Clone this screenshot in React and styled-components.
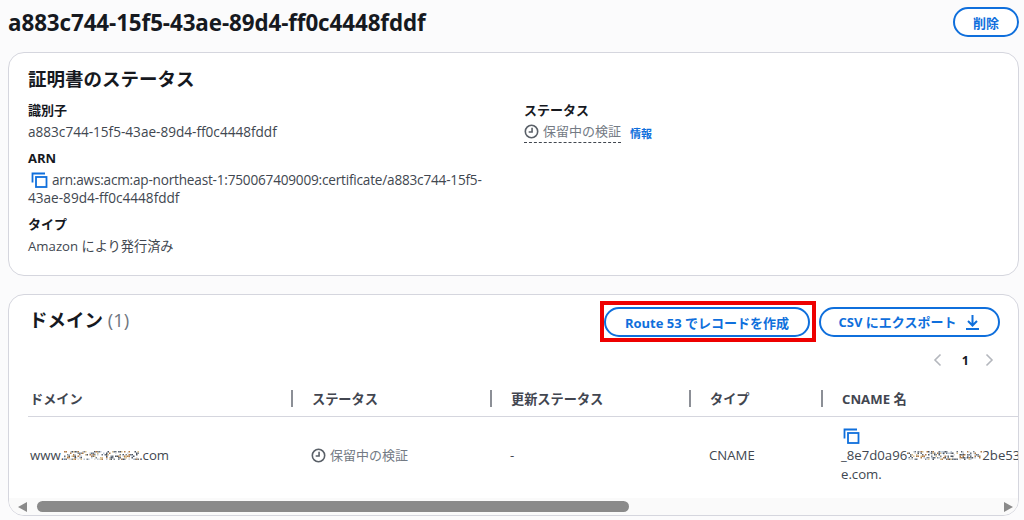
import React from 'react'
import styled, { createGlobalStyle } from 'styled-components'

const FONT = '"Open Sans", "Noto Sans CJK JP", sans-serif'
const BLUE = '#0f6fdc'

const GlobalStyle = createGlobalStyle`
  html, body { margin: 0; padding: 0; background: #fbfbfc; }
  body { font-family: ${FONT}; color: #16191f; width: 1024px; height: 520px; overflow: hidden; }
  * { box-sizing: border-box; }
`

const Page = styled.div`
  display: flex;
  flex-direction: column;
  padding: 7px 5px 0 8px;
`

const TitleRow = styled.div`
  display: flex;
  justify-content: space-between;
  align-items: center;
  height: 30px;
  margin-bottom: 15px;
`

const Title = styled.h1`
  margin: 0;
  font-size: 22.4px;
  font-weight: 700;
  letter-spacing: -0.1px;
  color: #16191f;
`

const PillButton = styled.button`
  display: flex;
  align-items: center;
  justify-content: center;
  gap: 9px;
  height: 30px;
  width: ${(p) => p.$width}px;
  padding: 0;
  border: 2px solid ${BLUE};
  border-radius: 15px;
  background: #fff;
  color: ${BLUE};
  font-family: ${FONT};
  font-size: 13px;
  font-weight: 700;
`

const Card = styled.section`
  position: relative;
  height: ${(p) => p.$height}px;
  margin-bottom: ${(p) => p.$gap || 0}px;
  border: 1px solid #d5d6de;
  border-radius: 16px;
  background: #fff;
  overflow: hidden;
`

const StatusBody = styled.div`
  padding: 14px 19px 0;
`

const SectionTitle = styled.h2`
  margin: 0 0 9px;
  font-size: 18.5px;
  line-height: 24px;
  font-weight: 700;
`

const Columns = styled.div`
  display: grid;
  grid-template-columns: 496px 1fr;
`

const Field = styled.div`
  margin-bottom: 7px;
`

const Label = styled.div`
  font-size: 13px;
  line-height: 21px;
  font-weight: 700;
`

const Value = styled.div`
  font-size: ${(p) => (p.$cjk ? 13.2 : 13.6)}px;
  line-height: 18px;
  color: #414750;
  width: ${(p) => (p.$wrap ? '470px' : 'auto')};
  padding-top: 2px;
  &::first-line {
    letter-spacing: ${(p) => (p.$wrap ? '-0.2px' : '0')};
  }
`

const CopyMark = styled.svg`
  display: ${(p) => (p.$block ? 'block' : 'inline-block')};
  width: 17px;
  height: 17px;
  margin: ${(p) => (p.$block ? '0 0 1px 2px' : '0 4px 0 3px')};
  vertical-align: -4px;
`

const StatusLine = styled.div`
  display: flex;
  align-items: center;
  gap: 9px;
  padding-top: 1px;
`

const Pending = styled.span`
  display: inline-flex;
  align-items: center;
  gap: 4px;
  font-size: 13px;
  line-height: 19px;
  color: #737a84;
  border-bottom: ${(p) => (p.$dashed ? '1px dashed #414750' : 'none')};
  padding-bottom: ${(p) => (p.$dashed ? '1px' : '0')};
`

const ClockMark = styled.svg`
  width: 15px;
  height: 15px;
  flex: none;
`

const InfoLink = styled.a`
  font-size: 11px;
  font-weight: 700;
  color: ${BLUE};
`

const DomainHead = styled.div`
  display: flex;
  justify-content: space-between;
  align-items: flex-start;
  padding: 6px 18px 0 20px;
`

const DomainTitle = styled.h2`
  margin: 7px 0 0;
  font-size: 18.5px;
  line-height: 24px;
  font-weight: 700;
`

const Count = styled.span`
  font-weight: 400;
  color: #6f7680;
`

const Actions = styled.div`
  display: flex;
  align-items: center;
  gap: 3px;
`

const Highlight = styled.div`
  border: 4px solid #ee0000;
  padding: 2px 2px 1px 0;
`

const Pager = styled.div`
  display: flex;
  justify-content: flex-end;
  align-items: center;
  gap: 14px;
  height: 20px;
  margin: 8px 23px 0 0;
  font-size: 12.5px;
  font-weight: 700;
`

const PageNumber = styled.span`
  margin-left: 4px;
`

const PagerMark = styled.svg`
  width: 12px;
  height: 14px;
`

const TableGrid = styled.div`
  display: grid;
  grid-template-columns: 264px 199px 199px 132px 240px;
  margin: 11px 0 0 19px;
  width: 1034px;
`

const HeadCell = styled.div`
  display: flex;
  align-items: center;
  height: 36px;
  border-bottom: 1px solid #d5d6de;
  font-size: 13.2px;
  font-weight: 700;
  color: #424650;
  padding-left: ${(p) => (p.$first ? '2px' : '20px')};
  position: relative;
  &::before {
    content: '';
    display: ${(p) => (p.$first ? 'none' : 'block')};
    position: absolute;
    left: -1px;
    top: 9px;
    height: 17px;
    width: 2px;
    background: #8c8f96;
  }
`

const BodyCell = styled.div`
  display: flex;
  align-items: ${(p) => (p.$top ? 'flex-start' : 'center')};
  flex-direction: ${(p) => (p.$top ? 'column' : 'row')};
  height: 76px;
  font-size: 13.2px;
  line-height: 19px;
  color: #414750;
  padding: ${(p) => (p.$top ? '11px 0 0 19px' : p.$first ? '0 0 0 2px' : '0 0 0 19px')};
`

const Masked = styled.svg`
  width: ${(p) => p.$width}px;
  height: 11px;
  vertical-align: -1px;
`

const ScrollStrip = styled.div`
  position: absolute;
  left: 0;
  right: 0;
  bottom: 0;
  height: 17px;
  display: flex;
  align-items: center;
  gap: 10px;
  padding: 0 5px 0 9px;
  background: #fafafa;
`

const ScrollArrow = styled.div`
  width: 0;
  height: 0;
  flex: none;
  border-top: 5.5px solid transparent;
  border-bottom: 5.5px solid transparent;
  ${(p) => (p.$right ? 'border-left: 9px solid #8a8a8a;' : 'border-right: 9px solid #8a8a8a;')}
`

const ScrollTrack = styled.div`
  flex: 1;
  height: 11px;
`

const ScrollThumb = styled.div`
  width: 592px;
  height: 11px;
  border-radius: 6px;
  background: #8a8a8a;
`

function CopyIcon({ block }) {
  return (
    <CopyMark $block={block} viewBox="0 0 17 17" fill="none" stroke={BLUE} strokeWidth="1.8">
      <path d="M1.5 10.5V1.5H14" />
      <rect x="5" y="5" width="10.5" height="10" />
    </CopyMark>
  )
}

function ClockIcon() {
  return (
    <ClockMark viewBox="0 0 16 16" fill="none" stroke="#5a6068" strokeWidth="1.7">
      <circle cx="8" cy="8" r="6.6" />
      <path d="M8.6 4v4.6H5" />
    </ClockMark>
  )
}

function DownloadIcon() {
  return (
    <svg width="15" height="16" viewBox="0 0 15 16" fill="none" stroke={BLUE} strokeWidth="2">
      <path d="M7.5 1v10M3 7l4.5 4.5L12 7M1 15h13" />
    </svg>
  )
}

// pixel noise standing in for the masked part of a domain name
const NOISE = ['#7d858e', '#d9c08e', '#4c5560', '#bcc8d6', '#b07c48', '#66717e', '#dcdcdc']

function MaskedText({ width, seed }) {
  const dots = []
  let r = seed
  for (let x = 0; x < width; x += 1.5) {
    for (let y = 1; y < 10; y += 1.5) {
      r = (r * 1103515245 + 12345) % 2147483648
      const n = Math.floor(r / 65536) % 15
      if (n < NOISE.length) dots.push(<rect key={`${x}-${y}`} x={x} y={y} width="1.5" height="1.5" fill={NOISE[n]} />)
    }
  }
  return <Masked $width={width} viewBox={`0 0 ${width} 11`}>{dots}</Masked>
}

export default function App() {
  return (
    <Page>
      <GlobalStyle />
      <TitleRow>
        <Title>a883c744-15f5-43ae-89d4-ff0c4448fddf</Title>
        <PillButton $width={66}>削除</PillButton>
      </TitleRow>

      <Card $height={224} $gap={18}>
        <StatusBody>
          <SectionTitle>証明書のステータス</SectionTitle>
          <Columns>
            <div>
              <Field>
                <Label>識別子</Label>
                <Value>a883c744-15f5-43ae-89d4-ff0c4448fddf</Value>
              </Field>
              <Field>
                <Label>ARN</Label>
                <Value $wrap>
                  <CopyIcon />
                  arn:aws:acm:ap-northeast-1:750067409009:certificate/a883c744-15f5-43ae-89d4-ff0c4448fddf
                </Value>
              </Field>
              <Field>
                <Label>タイプ</Label>
                <Value $cjk>Amazon により発行済み</Value>
              </Field>
            </div>
            <div>
              <Label>ステータス</Label>
              <StatusLine>
                <Pending $dashed>
                  <ClockIcon />
                  保留中の検証
                </Pending>
                <InfoLink>情報</InfoLink>
              </StatusLine>
            </div>
          </Columns>
        </StatusBody>
      </Card>

      <Card $height={222}>
        <DomainHead>
          <DomainTitle>
            ドメイン <Count>(1)</Count>
          </DomainTitle>
          <Actions>
            <Highlight>
              <PillButton $width={206}>Route 53 でレコードを作成</PillButton>
            </Highlight>
            <PillButton $width={181}>
              CSV にエクスポート
              <DownloadIcon />
            </PillButton>
          </Actions>
        </DomainHead>
        <Pager>
          <PagerMark viewBox="0 0 12 14" fill="none" stroke="#b4b7bd" strokeWidth="1.6">
            <path d="M8.5 1.5L3 7l5.5 5.5" />
          </PagerMark>
          <PageNumber>1</PageNumber>
          <PagerMark viewBox="0 0 12 14" fill="none" stroke="#b4b7bd" strokeWidth="1.6">
            <path d="M3.5 1.5L9 7l-5.5 5.5" />
          </PagerMark>
        </Pager>
        <TableGrid>
          <HeadCell $first>ドメイン</HeadCell>
          <HeadCell>ステータス</HeadCell>
          <HeadCell>更新ステータス</HeadCell>
          <HeadCell>タイプ</HeadCell>
          <HeadCell>CNAME 名</HeadCell>
          <BodyCell $first>
            <span>
              www.<MaskedText width={75} seed={7} />.com
            </span>
          </BodyCell>
          <BodyCell>
            <Pending>
              <ClockIcon />
              保留中の検証
            </Pending>
          </BodyCell>
          <BodyCell>-</BodyCell>
          <BodyCell>CNAME</BodyCell>
          <BodyCell $top>
            <CopyIcon block />
            <span>
              _8e7d0a96<MaskedText width={75} seed={23} />2be53
            </span>
            <span>e.com.</span>
          </BodyCell>
        </TableGrid>
        <ScrollStrip>
          <ScrollArrow />
          <ScrollTrack>
            <ScrollThumb />
          </ScrollTrack>
          <ScrollArrow $right />
        </ScrollStrip>
      </Card>
    </Page>
  )
}
